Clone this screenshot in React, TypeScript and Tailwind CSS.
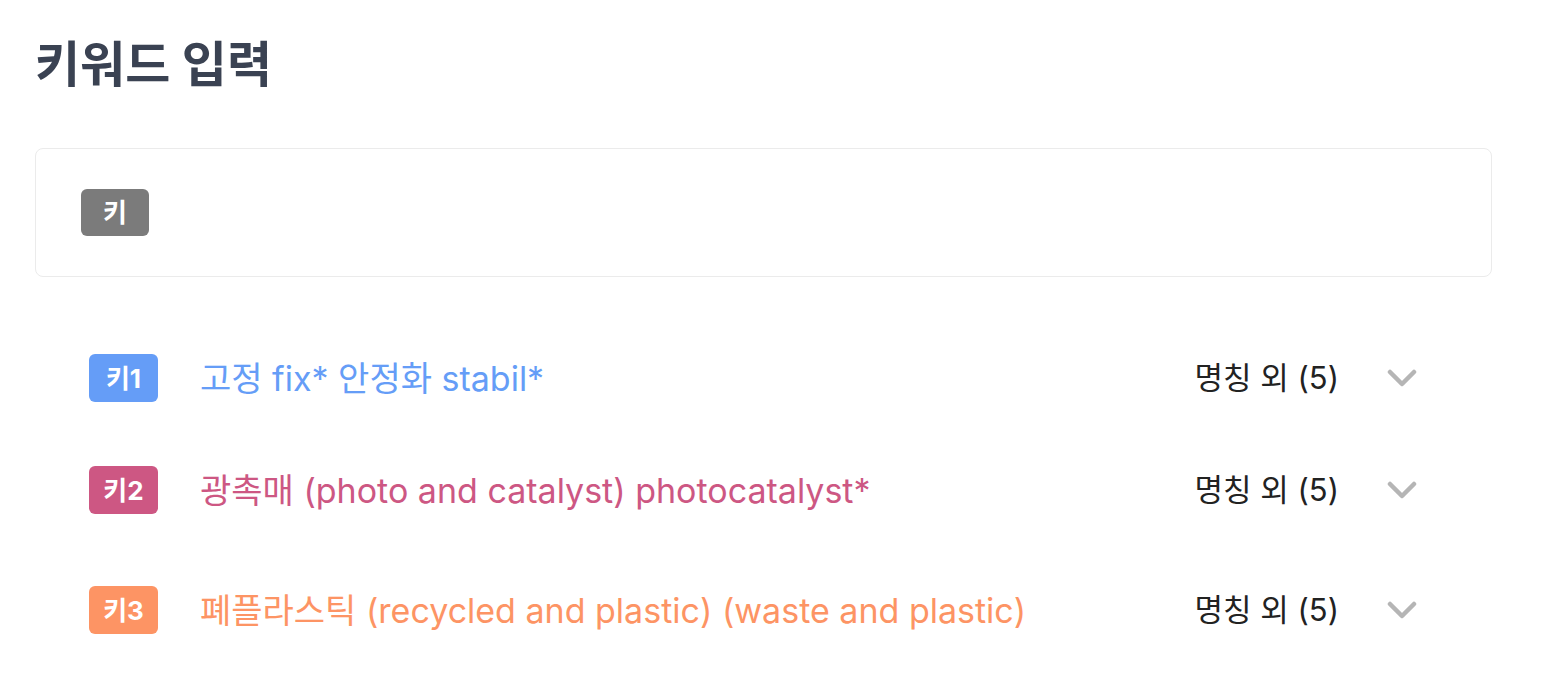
const font = { fontFamily: 'Inter, "Noto Sans CJK KR", sans-serif' };

interface Keyword {
  label: string;
  text: string;
  badge: string;
  color: string;
  mt: string;
}

const keywords: Keyword[] = [
  { label: '키1', text: '고정 fix* 안정화 stabil*', badge: 'bg-[#659df7]', color: 'text-[#659df7]', mt: 'mt-[77px]' },
  { label: '키2', text: '광촉매 (photo and catalyst) photocatalyst*', badge: 'bg-[#cd5783]', color: 'text-[#cd5783]', mt: 'mt-[64px]' },
  { label: '키3', text: '폐플라스틱 (recycled and plastic) (waste and plastic)', badge: 'bg-[#fd9464]', color: 'text-[#fd9464]', mt: 'mt-[72px]' },
];

export default function App() {
  return (
    <div className="min-h-screen bg-white pl-[35px] pt-[37px]" style={font}>
      <h1 className="text-[49px] font-bold leading-[56px] text-[#3a4252]">키워드 입력</h1>

      {/* Keyword input box */}
      <div className="mt-[55px] w-[1457px] h-[129px] border border-[#ebebeb] rounded-lg flex items-center px-[45px]">
        <span className="w-[68px] h-[47px] rounded-md bg-[#7b7b7b] text-white text-[26px] font-bold flex items-center justify-center">
          키
        </span>
      </div>

      {/* Keyword rows */}
      <div className="flex flex-col pl-[54px] pr-[125px]">
        {keywords.map((k) => (
          <div key={k.label} className={`flex items-center h-[48px] ${k.mt}`}>
            <span
              className={`w-[69px] h-[48px] rounded-md ${k.badge} text-white text-[26px] font-bold flex items-center justify-center flex-shrink-0`}
            >
              {k.label}
            </span>
            <span className={`ml-[42px] text-[34px] ${k.color}`}>{k.text}</span>
            <div className="ml-auto flex items-center">
              <span className="text-[31px] text-[#222222]">명칭 외 (5)</span>
              <svg className="ml-[48px] w-[30px] h-[18px]" viewBox="0 0 30 18" fill="none">
                <path d="M3 3 L15 15 L27 3" stroke="#b5b5b5" strokeWidth={4.5} strokeLinecap="round" strokeLinejoin="round" />
              </svg>
            </div>
          </div>
        ))}
      </div>
    </div>
  );
}
